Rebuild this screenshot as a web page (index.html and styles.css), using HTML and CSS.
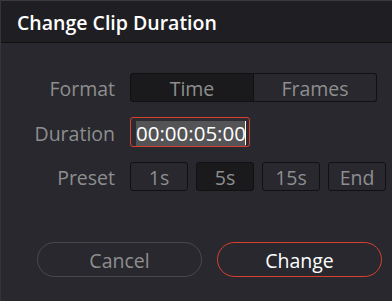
FILE: index.html
```html
<!DOCTYPE html>
<html>
<head>
  <title>Change Clip Duration</title>
  <meta name="viewport" content="width=device-width, initial-scale=1">
  <link rel="stylesheet" href="styles.css">
</head>
<body>
  <div class="dialog">
    <div class="title-bar">
      <h1>Change Clip Duration</h1>
    </div>

    <div class="form">
      <label class="field-label">Format</label>
      <div class="segments">
        <button class="segment active">Time</button>
        <button class="segment">Frames</button>
      </div>

      <label class="field-label">Duration</label>
      <div class="timecode">
        <span class="selected">00:00:05:00</span><span class="caret"></span>
      </div>

      <label class="field-label">Preset</label>
      <div class="presets">
        <button class="preset">1s</button>
        <button class="preset active">5s</button>
        <button class="preset">15s</button>
        <button class="preset">End</button>
      </div>
    </div>

    <div class="actions">
      <button class="pill cancel">Cancel</button>
      <button class="pill primary">Change</button>
    </div>
  </div>
</body>
</html>
```

FILE: styles.css
```css
:root {
  --title-bg: #1f1f23;
  --body-bg: #28282e;
  --dark-bg: #1a1a1c;
  --line-color: #111113;
  --label-color: #8e8e8e;
  --text-color: #ffffff;
  --accent-red: #d8402f;
  --font-family: 'Open Sans', 'Noto Sans', sans-serif;
}

body {
  margin: 0;
  padding: 0;
  background-color: var(--body-bg);
  font-family: var(--font-family);
}

.dialog {
  width: 392px;
  height: 301px;
  background-color: var(--body-bg);
  border-left: 1px solid #34343a;
  box-sizing: border-box;
}

.title-bar {
  height: 43px;
  background-color: var(--title-bg);
  border-bottom: 1px solid var(--line-color);
  border-top: 1px solid #3a3a3e;
  box-sizing: border-box;
  display: flex;
  align-items: center;
  padding-left: 16px;
}

h1 {
  margin: 0;
  font-size: 19.5px;
  font-weight: 600;
  color: var(--text-color);
  line-height: 1;
  padding-top: 2px;
}

.form {
  display: grid;
  grid-template-columns: 114px 1fr;
  column-gap: 15px;
  row-gap: 15px;
  padding: 30px 5px 0 0;
  align-items: center;
}

.field-label {
  text-align: right;
  font-size: 19.5px;
  line-height: 26px;
  padding-top: 3px;
  color: var(--label-color);
}

button {
  font-family: var(--font-family);
  cursor: pointer;
}

.segments {
  display: flex;
  width: 247px;
  height: 29px;
}

.segment {
  flex: 1;
  background-color: var(--body-bg);
  border: 1px solid var(--line-color);
  color: var(--label-color);
  font-size: 19.5px;
  padding: 3px 0 0;
  line-height: 1;
}

.segment:first-child {
  border-radius: 3px 0 0 3px;
}

.segment:last-child {
  border-radius: 0 3px 3px 0;
  border-left: none;
}

.segment.active {
  background-color: var(--dark-bg);
}

.timecode {
  width: 120px;
  height: 30px;
  box-sizing: border-box;
  border: 1px solid var(--accent-red);
  border-radius: 3px;
  background-color: #2c2c30;
  display: flex;
  align-items: center;
  padding: 2px 0 0 5px;
}

.selected {
  background-color: #545456;
  color: var(--text-color);
  font-size: 20.5px;
  line-height: 25px;
}

.caret {
  width: 1px;
  height: 24px;
  background-color: var(--text-color);
  margin-left: -1px;
}

.presets {
  display: flex;
  gap: 8px;
}

.preset {
  width: 58px;
  height: 29px;
  background-color: var(--body-bg);
  border: 1px solid var(--line-color);
  border-radius: 3px;
  color: var(--label-color);
  font-size: 19.5px;
  padding: 3px 0 0;
  line-height: 1;
}

.preset.active {
  background-color: var(--dark-bg);
}

.actions {
  display: flex;
  gap: 15px;
  padding: 51px 0 0 36px;
}

.pill {
  width: 165px;
  height: 35px;
  border-radius: 18px;
  background-color: transparent;
  font-size: 19.5px;
  padding: 3px 0 0;
  line-height: 1;
}

.cancel {
  border: 1px solid #48484d;
  color: var(--label-color);
}

.primary {
  border: 1px solid var(--accent-red);
  color: var(--text-color);
}
```
